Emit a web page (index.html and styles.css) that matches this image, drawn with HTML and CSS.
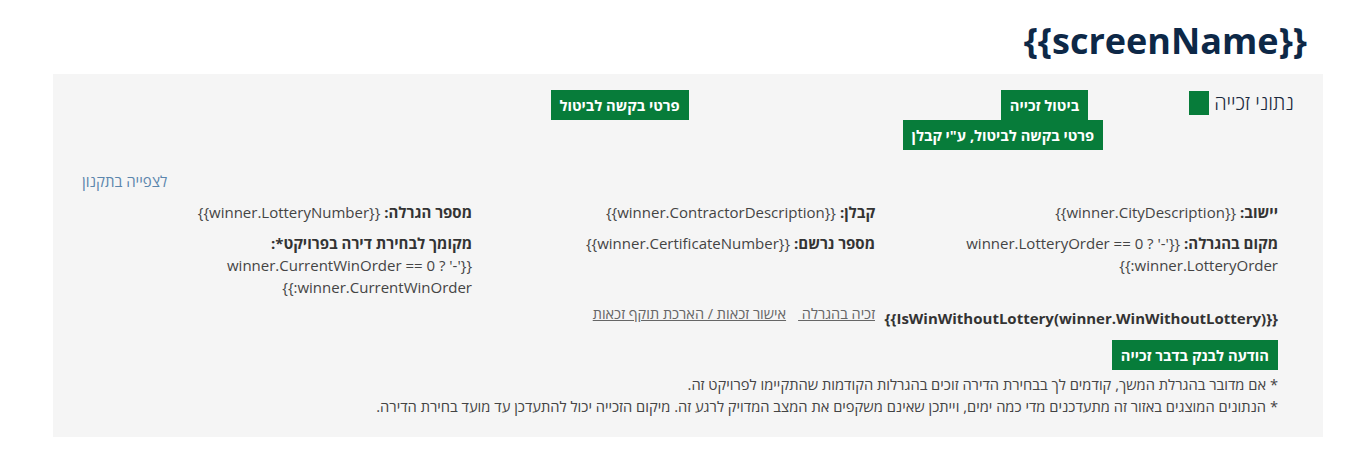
FILE: index.html
```html
<!DOCTYPE html>
<html lang="he">
<head>
<meta charset="utf-8">
<title>screen</title>
<link rel="stylesheet" href="styles.css">
</head>
<body>
<header class="page-head">
  <h1 class="screen-title">{{screenName}}</h1>
</header>
<section class="panel" dir="rtl">
  <div class="top-row">
    <div class="section-title">
      <span class="title-text">נתוני זכייה</span>
      <span class="title-mark"></span>
    </div>
    <div class="btn-stack">
      <a class="btn btn-first">ביטול זכייה</a>
      <a class="btn">פרטי בקשה לביטול, ע"י קבלן</a>
    </div>
    <a class="btn btn-cancel-details">פרטי בקשה לביטול</a>
  </div>
  <div class="regs-row">
    <a class="regs-link">לצפייה בתקנון</a>
  </div>
  <div class="info-grid">
    <div class="col">
      <div class="item"><b>יישוב:</b> {{winner.CityDescription}}</div>
      <div class="item"><b>מקום בהגרלה:</b> {{winner.LotteryOrder == 0 ? '-' :winner.LotteryOrder}}</div>
    </div>
    <div class="col">
      <div class="item"><b>קבלן:</b> {{winner.ContractorDescription}}</div>
      <div class="item"><b>מספר נרשם:</b> {{winner.CertificateNumber}}</div>
    </div>
    <div class="col">
      <div class="item"><b>מספר הגרלה:</b> {{winner.LotteryNumber}}</div>
      <div class="item"><b>מקומך לבחירת דירה בפרויקט*:</b><br>{{winner.CurrentWinOrder == 0 ? '-' :winner.CurrentWinOrder}}</div>
    </div>
    <div class="col">
      <div class="item win-type"><b>{{IsWinWithoutLottery(winner.WinWithoutLottery)}}</b></div>
    </div>
    <div class="col links">
      <a class="doc-link">זכיה בהגרלה </a>
      <a class="doc-link">אישור זכאות / הארכת תוקף זכאות</a>
    </div>
  </div>
  <div class="bank-row">
    <a class="btn">הודעה לבנק בדבר זכייה</a>
  </div>
  <div class="notes">
    <p>* אם מדובר בהגרלת המשך, קודמים לך בבחירת הדירה זוכים בהגרלות הקודמות שהתקיימו לפרויקט זה.</p>
    <p>* הנתונים המוצגים באזור זה מתעדכנים מדי כמה ימים, וייתכן שאינם משקפים את המצב המדויק לרגע זה. מיקום הזכייה יכול להתעדכן עד מועד בחירת הדירה.</p>
  </div>
</section>
</body>
</html>
```

FILE: styles.css
```css
html, body {
  margin: 0;
  padding: 0;
  background: #ffffff;
  font-family: "Open Sans", "Noto Sans", "Liberation Sans", sans-serif;
  color: #333333;
}

.page-head {
  height: 74px;
  padding-right: 55px;
  box-sizing: border-box;
  text-align: right;
}

.screen-title {
  margin: 0;
  padding-top: 16px;
  font-size: 36px;
  line-height: 50px;
  font-weight: 700;
  color: #0d2847;
}

.panel {
  margin: 0 39px 0 53px;
  height: 363px;
  box-sizing: border-box;
  background: #f5f5f5;
  padding: 16px 29px 0 15px;
  font-size: 15px;
}

.top-row {
  display: flex;
  align-items: flex-start;
}

.section-title {
  display: flex;
  align-items: center;
  gap: 5px;
  height: 26px;
}

.title-text {
  font-size: 20px;
  font-weight: 300;
  color: #1c2a3f;
  line-height: 26px;
}

.title-mark {
  width: 20px;
  height: 24px;
  background: #077c3a;
}

.btn-stack {
  display: flex;
  flex-direction: column;
  align-items: flex-start;
  margin-right: 86px;
}

.btn {
  display: inline-block;
  background: #077c3a;
  color: #ffffff;
  font-weight: 700;
  font-size: 14.7px;
  line-height: 30px;
  padding: 0 9px;
  white-space: nowrap;
}

.btn-first {
  margin-right: 15px;
}

.btn-cancel-details {
  margin-right: 214px;
}

.regs-row {
  margin-top: 20px;
  text-align: left;
  padding-left: 14px;
  line-height: 22px;
}

.regs-link {
  color: #5b86ad;
  font-size: 15px;
}

.info-grid {
  margin-top: 9px;
  margin-right: 16px;
  display: grid;
  grid-template-columns: repeat(3, 403px);
}

.item {
  line-height: 22px;
  margin-bottom: 9px;
  color: #444444;
}

.item b {
  color: #333333;
  font-weight: 700;
}

.win-type {
  margin-bottom: 0;
  white-space: nowrap;
}

.links {
  display: flex;
  gap: 12px;
  align-items: flex-start;
  line-height: 14px;
}

.doc-link {
  color: #666666;
  text-decoration: underline;
  font-size: 14.5px;
  white-space: pre;
}

.bank-row {
  margin-top: 11px;
  margin-right: 16px;
}

.notes {
  margin-top: 3px;
  margin-right: 16px;
}

.notes p {
  margin: 0;
  line-height: 22px;
  font-size: 14.7px;
  color: #444444;
}
```
